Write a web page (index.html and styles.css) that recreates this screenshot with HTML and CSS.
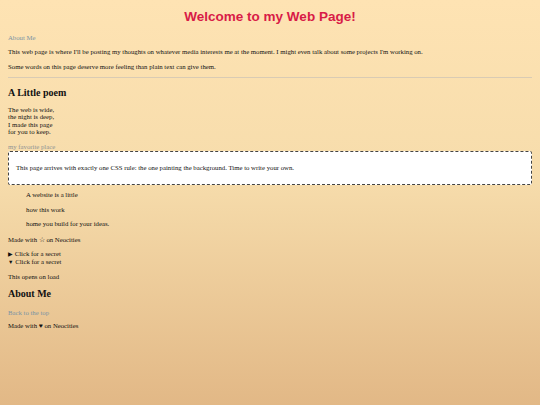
FILE: index.html
```html
<!DOCTYPE html>
<html>
<head>
<meta charset="utf-8">
<link rel="stylesheet" href="styles.css">
</head>
<body>
<h1 class="title">Welcome to my Web Page!</h1>
<a class="link" href="#about">About Me</a>
<p>This web page is where I'll be posting my thoughts on whatever media interests me at the moment. I might even talk about some projects I'm working on.</p>
<p>Some words on this page deserve more feeling than plain text can give them.</p>
<hr class="rule">
<h2 class="heading">A Little poem</h2>
<p class="poem">The web is wide,<br>the night is deep,<br>I made this page<br>for you to keep.</p>
<a class="link fav" href="#">my favorite place</a>
<div class="box">This page arrives with exactly one CSS rule: the one painting the background. Time to write your own.</div>
<div class="quote">
<p>A website is a little</p>
<p>how this work</p>
<p>home you build for your ideas.</p>
</div>
<p class="made">Made with ☆ on Neocities</p>
<div class="details">
<div><span class="arrow">▶</span> Click for a secret</div>
<div><span class="arrow">▼</span> Click for a secret</div>
</div>
<p>This opens on load</p>
<h2 class="heading about" id="about">About Me</h2>
<a class="link back" href="#">Back to the top</a>
<p class="last">Made with ♥ on Neocities</p>
</body>
</html>
```
FILE: styles.css
```css
html {
  min-height: 100%;
  background: linear-gradient(to bottom, #fee3b3 0%, #f6dcab 45%, #e2b886 100%);
}
body {
  margin: 0;
  padding: 7px 8px;
  font-family: "Liberation Serif", serif;
  font-size: 6.75px;
  line-height: 1.15;
  color: #111;
}
.title {
  font-family: "Liberation Sans", Arial, sans-serif;
  font-size: 13.5px;
  font-weight: bold;
  color: #d81b47;
  text-align: center;
  margin: 2px 0 9px;
}
p {
  margin: 6.75px 0;
}
.link {
  display: block;
  color: #7b94a4;
  text-decoration: none;
}
.rule {
  border: none;
  border-top: 1.5px solid #d9cbb4;
  margin: 6.5px 0 6px;
}
.heading {
  font-size: 10px;
  font-weight: bold;
  margin: 9px 0 7px;
}
.poem {
  margin: 7px 0 6px;
  line-height: 1.13;
}
.fav {
  color: #8e9394;
  margin-top: 8px;
  line-height: 1;
}
.box {
  background: #fff;
  border: 1px dashed #444;
  border-radius: 2px;
  padding: 12px 7px;
  margin-top: 0;
}
.quote {
  margin: 6px 0 0 18px;
}
.made {
  margin-top: 7.75px;
}
.details {
  margin: 2.75px 0 6.75px;
  line-height: 1.15;
}
.arrow {
  font-size: 5.5px;
}
.about {
  margin-top: 8px;
  margin-bottom: 9px;
}
.back {
  margin-top: 0;
}
.last {
  margin-top: 5.75px;
}
```
